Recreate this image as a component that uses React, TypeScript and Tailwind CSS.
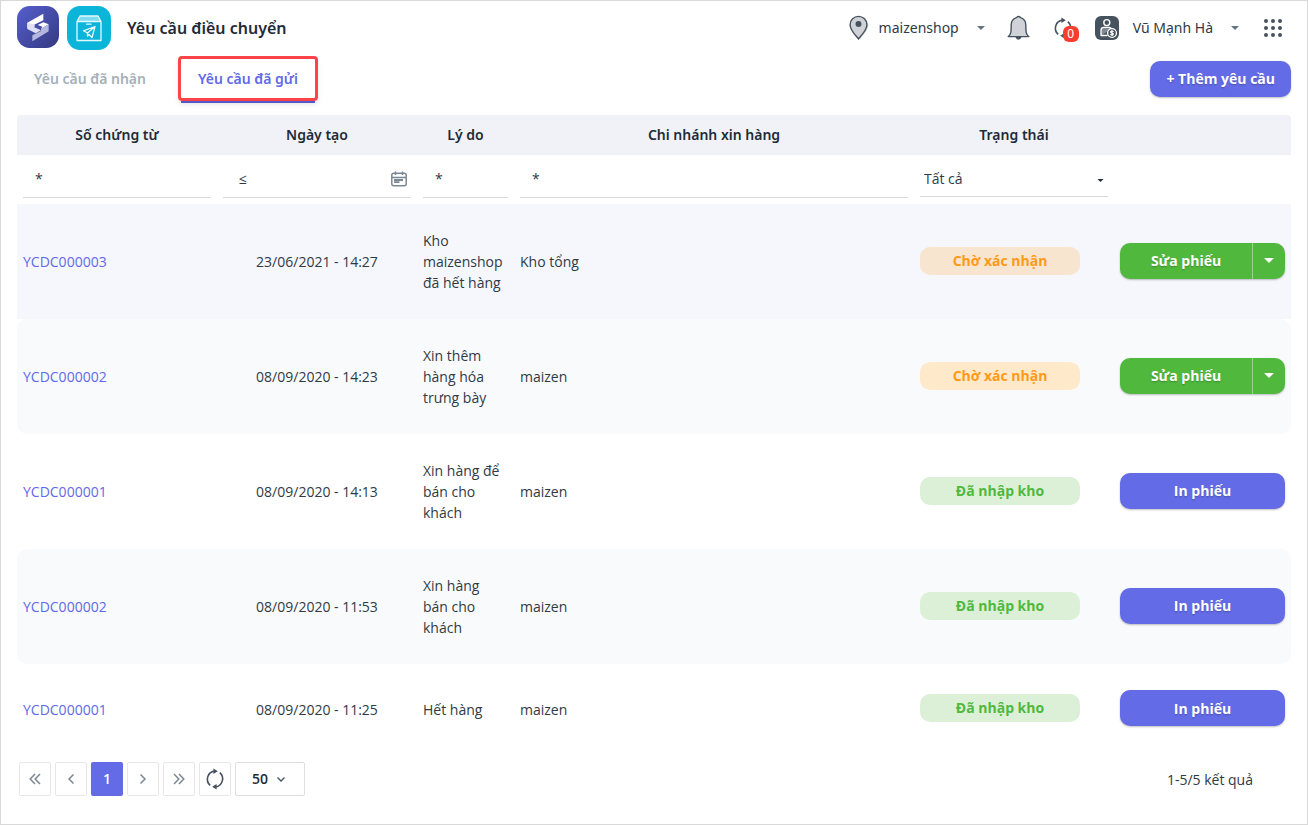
import React, { useState } from 'react';

type Status = 'pending' | 'imported';

interface TransferRequest {
    id: number;
    code: string;
    createdAt: string;
    reason: string;
    branch: string;
    status: Status;
}

const requests: TransferRequest[] = [
    { id: 1, code: 'YCDC000003', createdAt: '23/06/2021 - 14:27', reason: 'Kho maizenshop đã hết hàng', branch: 'Kho tổng', status: 'pending' },
    { id: 2, code: 'YCDC000002', createdAt: '08/09/2020 - 14:23', reason: 'Xin thêm hàng hóa trưng bày', branch: 'maizen', status: 'pending' },
    { id: 3, code: 'YCDC000001', createdAt: '08/09/2020 - 14:13', reason: 'Xin hàng để bán cho khách', branch: 'maizen', status: 'imported' },
    { id: 4, code: 'YCDC000002', createdAt: '08/09/2020 - 11:53', reason: 'Xin hàng bán cho khách', branch: 'maizen', status: 'imported' },
    { id: 5, code: 'YCDC000001', createdAt: '08/09/2020 - 11:25', reason: 'Hết hàng', branch: 'maizen', status: 'imported' },
];

const Logo = () => (
    <svg viewBox="0 0 126 126" className="w-[42px] h-[42px]" aria-hidden="true">
        <defs>
            <linearGradient id="logo-bg" x1="0" y1="0" x2="1" y2="1">
                <stop offset="0" stopColor="#5560cf" />
                <stop offset="1" stopColor="#34397f" />
            </linearGradient>
        </defs>
        <rect width="126" height="126" rx="38" fill="url(#logo-bg)" />
        <path d="M79 23 V43 L56 54 L31 66 V50 Z" fill="#fff" />
        <path d="M31 50 L54 56 L52 64 L72 73 L56 82 L31 69 Z" fill="#dfe0f3" />
        <path d="M62 57 L79 49 L95 55 L72 68 L76 62 Z" fill="#fff" />
        <path d="M95 55 V76 L46 106 V88 L72 75 V68 Z" fill="#b5b8de" />
    </svg>
);

const AppIcon = () => (
    <svg viewBox="0 0 44 44" className="w-11 h-11" aria-hidden="true">
        <rect width="44" height="44" rx="13" fill="#0bb5da" />
        <path d="M13 10 H31 L34 15 H10 Z" fill="#7fdcf0" />
        <g fill="none" stroke="#e6f9fd" strokeWidth="1.3" strokeLinejoin="round" strokeLinecap="round">
            <path d="M10 15.5 L13 10 H31 L34 15.5 V34.5 H10 Z M10 15.5 H34" />
            <path d="M19.5 18.2 H24" />
            <path d="M28 20.5 L16.5 24.8 L20.5 27 V30 L22 28.5 L25 31.5 Z M28 20.5 L20.5 27" />
        </g>
    </svg>
);

const PinIcon = () => (
    <svg viewBox="0 0 20 26" className="w-5 h-[26px]" aria-hidden="true">
        <path d="M11 25 C13 20 19.5 15 19.5 10 A8.6 8.6 0 0 0 12 2 Z" fill="#d4d7da" />
        <path d="M9.5 24 C8 21.6 1.1 16 1.1 9.8 A8.4 8.4 0 0 1 17.9 9.8 C17.9 16 11 21.6 9.5 24 Z" fill="#cfd3d8" stroke="#47525f" strokeWidth="1.4" />
        <circle cx="9.5" cy="9" r="3" fill="#47525f" />
    </svg>
);

const BellIcon = () => (
    <svg viewBox="0 0 24 26" className="w-6 h-[26px]" aria-hidden="true">
        <path d="M8.5 22 H14.5 Q13.5 24.8 11.5 24.8 Q9.5 24.8 8.5 22 Z" fill="#47525f" />
        <path d="M1.2 21.6 C4 19.6 4.2 17 4.2 9.8 C4.2 5.8 7 3.4 9.4 2.6 Q11.5 0.6 13.6 2.6 C16 3.4 18.8 5.8 18.8 9.8 C18.8 17 19 19.6 21.8 21.6 Z" fill="#cfd3d8" stroke="#47525f" strokeWidth="1.4" strokeLinejoin="round" />
    </svg>
);

const SyncIcon = () => (
    <svg viewBox="0 0 20 22" className="w-5 h-[22px]" fill="none" stroke="#47525f" strokeWidth="1.6" aria-hidden="true">
        <path d="M5.2 17.4 A8.2 8.2 0 0 1 9.5 3.1" />
        <path d="M14.8 4.6 A8.2 8.2 0 0 1 10.5 18.9" />
        <path d="M8.4 0.4 L12.8 3.2 L8.4 6 Z M11.6 21.6 L7.2 18.8 L11.6 16 Z" fill="#47525f" stroke="none" />
    </svg>
);

const StaffIcon = () => (
    <svg viewBox="0 0 24 24" className="w-6 h-6" aria-hidden="true">
        <rect width="24" height="24" rx="6" fill="#47525f" />
        <path d="M6 19.5 V14 Q6 11.3 9 11.3 H14 Q16 11.3 16.6 13 M6 19.5 H12" fill="#818a94" stroke="#fff" strokeWidth="1.3" strokeLinecap="round" />
        <circle cx="11.8" cy="6.6" r="3" fill="none" stroke="#fff" strokeWidth="1.4" />
        <circle cx="17" cy="17" r="4.4" fill="#47525f" stroke="#fff" strokeWidth="1.3" />
        <path d="M18.7 15.6 Q17 14.5 15.8 15.5 Q15.2 16.6 17 17 Q18.9 17.4 18.2 18.5 Q17 19.5 15.2 18.4 M17 14 V20" fill="none" stroke="#fff" strokeWidth="1.1" />
    </svg>
);

const AppsIcon = () => (
    <svg viewBox="0 0 18 18" className="w-[18px] h-[18px]" fill="#47525f" aria-hidden="true">
        {[2, 9, 16].map((y) => [2, 9, 16].map((x) => <circle key={`${x}-${y}`} cx={x} cy={y} r="2" />))}
    </svg>
);

const CalendarIcon = () => (
    <svg viewBox="0 0 16 16" className="w-4 h-4" fill="none" stroke="#7b8794" strokeWidth="1.5" aria-hidden="true">
        <rect x="0.8" y="2.2" width="14.4" height="12.6" rx="2" />
        <path d="M1 6.4 H15 M4.5 0.4 V4 M11.5 0.4 V4" />
        <path d="M3 9 H12 M3 11.2 H8.5" strokeWidth="1.8" />
    </svg>
);

const Caret = ({ className = '' }: { className?: string }) => (
    <svg viewBox="0 0 10 5" className={className} fill="currentColor" aria-hidden="true">
        <path d="M0 0 H10 L5 5 Z" />
    </svg>
);

// Thin angle arrows of the pager, one or two strokes
const Chevron = ({ double = false, flip = false }: { double?: boolean; flip?: boolean }) => (
    <svg viewBox="0 0 12 12" className={`w-3 h-3 ${flip ? 'rotate-180' : ''}`} fill="none" stroke="#7b8794" strokeWidth="1.5" aria-hidden="true">
        {double ? <path d="M6 1 L1.2 6 L6 11 M11 1 L6.2 6 L11 11" /> : <path d="M8.5 1.5 L4 6 L8.5 10.5" />}
    </svg>
);

const TopBar = () => (
    <header className="flex items-center justify-between h-[54px] font-['Noto_Sans',sans-serif]">
        <div className="flex items-center">
            <a href="#" aria-label="Trang chủ" className="mr-2 mb-0.5"><Logo /></a>
            <AppIcon />
            <h1 className="ml-4 text-base font-semibold text-[#212b36]">Yêu cầu điều chuyển</h1>
        </div>
        <div className="flex items-center pr-[9px]">
            <button className="flex items-center mr-[22px]">
                <PinIcon />
                <span className="ml-2.5 mr-[18px] pb-0.5">maizenshop</span>
                <Caret className="w-2 h-1 text-[#637381]" />
            </button>
            <button aria-label="Thông báo" className="mr-[22px]"><BellIcon /></button>
            <button aria-label="Đồng bộ" className="relative mr-[22px]">
                <SyncIcon />
                <span className="absolute -right-1.5 -bottom-[3px] w-4 h-4 rounded-md bg-[#f93e31] text-white text-xs leading-4 text-center">0</span>
            </button>
            <button className="flex items-center mr-[25px]">
                <StaffIcon />
                <span className="ml-3.5 mr-[18px] pb-0.5">Vũ Mạnh Hà</span>
                <Caret className="w-2 h-1 text-[#637381]" />
            </button>
            <button aria-label="Ứng dụng"><AppsIcon /></button>
        </div>
    </header>
);

const Tabs = () => {
    const [active, setActive] = useState('sent');
    return (
        <div className="flex items-start gap-[18px] pt-0.5 font-semibold font-['Noto_Sans',sans-serif]">
            <button onClick={() => setActive('received')} className={`h-[46px] px-[17px] pb-0.5 border-b-2 ${active === 'received' ? 'text-[#6169e6] border-[#5b63e0]' : 'text-[#a6b0ba] border-transparent'}`}>Yêu cầu đã nhận</button>
            <button onClick={() => setActive('sent')} className={`relative h-[46px] px-[17px] pb-0.5 border-b-2 ${active === 'sent' ? 'text-[#6169e6] border-[#5b63e0]' : 'text-[#a6b0ba] border-transparent'}`}>
                Yêu cầu đã gửi
                <span className="absolute -inset-x-[3px] -top-px bottom-0 rounded-sm border-3 border-[#fc4349] shadow-md" />
            </button>
        </div>
    );
};

const FilterInput = ({ label, operator }: { label: string; operator: string }) => (
    <label className="flex items-center h-[43px] border-b border-[#d9d9d9] pl-3 pt-1">
        <span>{operator}</span>
        <input type="text" aria-label={label} className="flex-1 min-w-0 ml-2 outline-none" />
    </label>
);

const StatusBadge = ({ status, hovered }: { status: Status; hovered: boolean }) => {
    if (status === 'imported') {
        return <span className="block w-40 leading-7 rounded-[10px] bg-[#dcf0d8] text-[#50b83c] font-bold text-center">Đã nhập kho</span>;
    }
    return <span className={`block w-40 leading-7 rounded-[10px] text-[#ff9a18] font-bold text-center ${hovered ? 'bg-[#f7e5cf]' : 'bg-[#ffe9cb]'}`}>Chờ xác nhận</span>;
};

const RowAction = ({ status }: { status: Status }) => {
    if (status === 'imported') {
        return <button className="w-full h-9 rounded-[10px] bg-[#636be6] text-white font-bold shadow-[0_1px_2px_rgba(0,0,0,0.25)] text-shadow-sm">In phiếu</button>;
    }
    return (
        <div className="flex h-9 rounded-[10px] bg-[#50b83c] text-white font-bold shadow-[0_1px_2px_rgba(0,0,0,0.25)] overflow-hidden">
            <button className="flex-1 text-shadow-sm">Sửa phiếu</button>
            <button aria-label="Thao tác khác" className="w-[33px] flex items-center justify-center border-l border-white/40">
                <Caret className="w-2.5 h-[5px]" />
            </button>
        </div>
    );
};

const rowBackground = (index: number) => {
    if (index === 0) return 'bg-[#f6f7fd]';
    if (index % 2 === 1) return 'bg-[#f9fafc]';
    return '';
};

const RequestTable = () => (
    <table className="w-full table-fixed">
        <colgroup>
            <col className="w-[200px]" />
            <col className="w-[200px]" />
            <col className="w-[97px]" />
            <col />
            <col className="w-[200px]" />
            <col className="w-[177px]" />
        </colgroup>
        <thead>
            <tr className="h-10 text-[#212b36] font-['Noto_Sans',sans-serif]">
                <th className="pb-0.5 bg-[#f1f2f8] font-semibold rounded-tl">Số chứng từ</th>
                <th className="pb-0.5 bg-[#f1f2f8] font-semibold">Ngày tạo</th>
                <th className="pb-0.5 bg-[#f1f2f8] font-semibold">Lý do</th>
                <th className="pb-0.5 bg-[#f1f2f8] font-semibold">Chi nhánh xin hàng</th>
                <th className="pb-0.5 bg-[#f1f2f8] font-semibold">Trạng thái</th>
                <td className="bg-[#f1f2f8] rounded-tr" />
            </tr>
            <tr className="align-top">
                <td className="px-1.5 pb-1.5"><FilterInput label="Số chứng từ" operator="*" /></td>
                <td className="px-1.5 pb-1.5">
                    <label className="flex items-center h-[43px] border-b border-[#d9d9d9] pl-4 pr-1 pt-1.5">
                        <span className="pb-0.5">≤</span>
                        <input type="text" aria-label="Ngày tạo" className="flex-1 min-w-0 mx-2 outline-none" />
                        <CalendarIcon />
                    </label>
                </td>
                <td className="px-1.5 pb-1.5"><FilterInput label="Lý do" operator="*" /></td>
                <td className="px-1.5 pb-1.5"><FilterInput label="Chi nhánh xin hàng" operator="*" /></td>
                <td className="px-1.5 pb-1.5">
                    <div className="relative">
                        <select aria-label="Trạng thái" className="block w-full h-[42px] appearance-none border-b border-[#d9d9d9] pl-1 pt-1.5 outline-none">
                            <option>Tất cả</option>
                            <option>Chờ xác nhận</option>
                            <option>Đã nhập kho</option>
                        </select>
                        <Caret className="absolute right-1 top-6 w-[7px] h-[3px] text-[#212b36] pointer-events-none" />
                    </div>
                </td>
                <td />
            </tr>
        </thead>
        <tbody>
            {requests.map((r, i) => {
                const bg = rowBackground(i);
                return (
                    <tr key={r.id}>
                        <td className={`px-1.5 py-[26px] ${bg} ${i > 0 ? 'rounded-l-[10px]' : ''}`}><a href="#" className="text-[#6169e6]">{r.code}</a></td>
                        <td className={`px-1.5 py-[26px] text-center ${bg}`}>{r.createdAt}</td>
                        <td className={`pl-1.5 pr-2 py-[26px] ${bg}`}>{r.reason}</td>
                        <td className={`px-1.5 py-[26px] ${bg}`}>{r.branch}</td>
                        <td className={`px-1.5 pt-[26px] pb-7 ${bg}`}><StatusBadge status={r.status} hovered={i === 0} /></td>
                        <td className={`px-1.5 pt-[26px] pb-7 ${bg} ${i > 0 ? 'rounded-r-[10px]' : ''}`}><RowAction status={r.status} /></td>
                    </tr>
                );
            })}
        </tbody>
    </table>
);

const pagerButton = 'w-8 h-[34px] rounded-xs border border-[#e6e7ea] flex items-center justify-center';

const Pager = () => (
    <footer className="flex items-center justify-between mt-2 pl-0.5 pr-[38px]">
        <nav aria-label="Phân trang" className="flex gap-1">
            <button aria-label="Trang đầu" className={pagerButton}><Chevron double /></button>
            <button aria-label="Trang trước" className={pagerButton}><Chevron /></button>
            <button className="w-8 h-[34px] pb-0.5 rounded-xs bg-[#636be6] text-white font-semibold">1</button>
            <button aria-label="Trang sau" className={pagerButton}><Chevron flip /></button>
            <button aria-label="Trang cuối" className={pagerButton}><Chevron double flip /></button>
            <button aria-label="Tải lại" className={pagerButton}><SyncIcon /></button>
            <div className="relative">
                <select aria-label="Số dòng" className="w-[70px] h-[34px] pl-4 pb-0.5 appearance-none rounded-xs border border-[#dcdee2] font-semibold text-[#212b36]">
                    <option>50</option>
                    <option>100</option>
                </select>
                <svg viewBox="0 0 8 5" className="absolute right-5 top-[15px] w-2 h-[5px] pointer-events-none" fill="none" stroke="#47525f" strokeWidth="1.3" aria-hidden="true">
                    <path d="M0.5 0.5 L4 4 L7.5 0.5" />
                </svg>
            </div>
        </nav>
        <span>1-5/5 kết quả</span>
    </footer>
);

export default function App() {
    return (
        <main className="min-h-screen border border-[#d9d9d9] bg-white px-4 text-sm leading-[21px] text-[#2f3a45] font-['Open_Sans','Noto_Sans',sans-serif]">
            <TopBar />
            <div className="flex items-start justify-between h-[60px]">
                <Tabs />
                <button className="h-9 mt-1.5 px-4 pb-0.5 rounded-[10px] bg-[#636be6] text-white font-bold shadow-[0_1px_2px_rgba(0,0,0,0.25)] text-shadow-sm">+ Thêm yêu cầu</button>
            </div>
            <RequestTable />
            <Pager />
        </main>
    );
}
